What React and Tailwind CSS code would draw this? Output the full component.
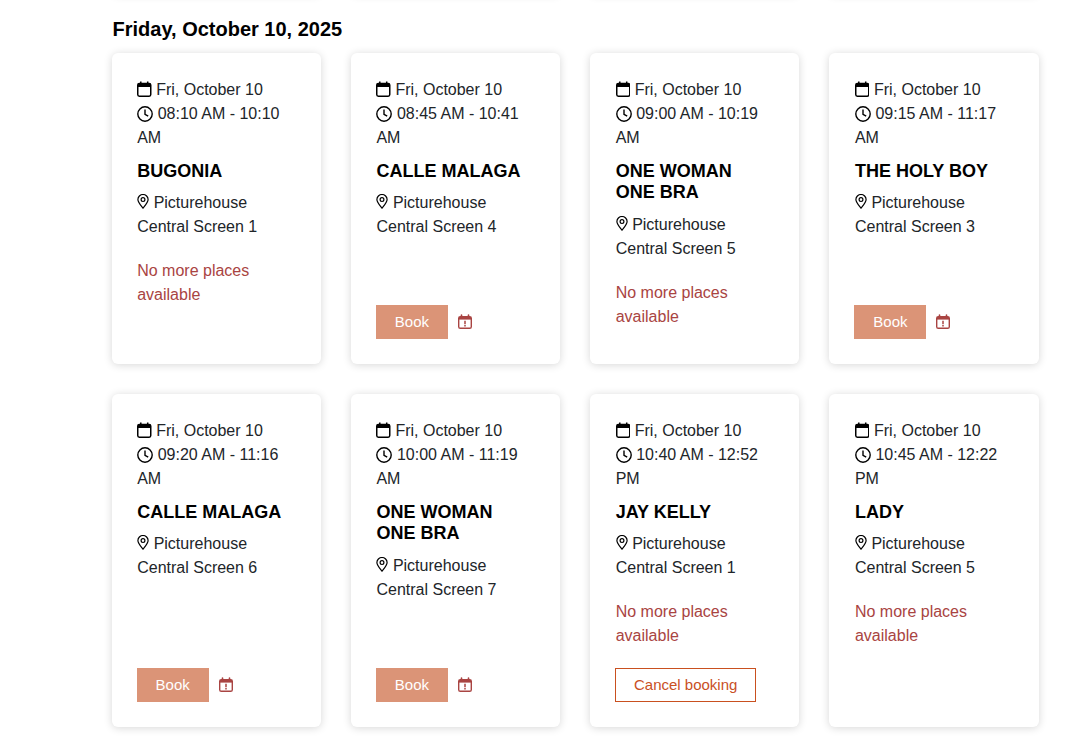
const rows = [
  [
    { time: '08:10 AM - 10:10 AM', title: 'BUGONIA', screen: 'Central Screen 1', full: true },
    { time: '08:45 AM - 10:41 AM', title: 'CALLE MALAGA', screen: 'Central Screen 4' },
    { time: '09:00 AM - 10:19 AM', title: 'ONE WOMAN ONE BRA', screen: 'Central Screen 5', full: true },
    { time: '09:15 AM - 11:17 AM', title: 'THE HOLY BOY', screen: 'Central Screen 3' },
  ],
  [
    { time: '09:20 AM - 11:16 AM', title: 'CALLE MALAGA', screen: 'Central Screen 6' },
    { time: '10:00 AM - 11:19 AM', title: 'ONE WOMAN ONE BRA', screen: 'Central Screen 7' },
    { time: '10:40 AM - 12:52 PM', title: 'JAY KELLY', screen: 'Central Screen 1', full: true, booked: true },
    { time: '10:45 AM - 12:22 PM', title: 'LADY', screen: 'Central Screen 5', full: true },
  ],
];

const cardShadow = 'rounded-md bg-white shadow-[0_1px_8px_rgba(0,0,0,0.16)]';

function CalendarIcon() {
  return (
    <svg width="14.5" height="16" viewBox="0 0 14.5 16" className="inline-block align-[-2px] text-black">
      <path d="M3.8 0.5v3M10.7 0.5v3" stroke="currentColor" strokeWidth="1.5" />
      <rect x="0.75" y="2.5" width="13" height="12.7" rx="1.6" fill="none" stroke="currentColor" strokeWidth="1.5" />
      <path d="M1 3h12.5v3H1z" fill="currentColor" />
    </svg>
  );
}

function ClockIcon() {
  return (
    <svg width="16" height="16" viewBox="0 0 16 16" className="inline-block align-[-2.5px] text-black">
      <circle cx="8" cy="8" r="7.2" fill="none" stroke="currentColor" strokeWidth="1.4" />
      <path d="M8 3.6V8.3l3.2 1.9" fill="none" stroke="currentColor" strokeWidth="1.4" />
    </svg>
  );
}

function PinIcon() {
  return (
    <svg width="12" height="15" viewBox="0 0 12 15" className="inline-block align-[-1px] text-black">
      <path
        d="M6 14.2C4.2 11.9 0.9 8.5 0.9 5.6a5.1 5.1 0 0 1 10.2 0C11.1 8.5 7.8 11.9 6 14.2z"
        fill="none"
        stroke="currentColor"
        strokeWidth="1.2"
      />
      <circle cx="6" cy="5.6" r="1.9" fill="none" stroke="currentColor" strokeWidth="1.2" />
    </svg>
  );
}

function CalendarAlert() {
  return (
    <svg width="16" height="16" viewBox="0 0 16 16" className="text-[#a94442]">
      <path d="M4.5 1v3M11.5 1v3" stroke="currentColor" strokeWidth="1.6" strokeLinecap="round" />
      <rect x="1.7" y="2.7" width="12.6" height="11.6" rx="1.6" fill="none" stroke="currentColor" strokeWidth="1.4" />
      <path d="M2 3h12v2.6H2z" fill="currentColor" />
      <path d="M8 6.8v3.4M8 11v1.4" stroke="currentColor" strokeWidth="1.5" />
    </svg>
  );
}

function Screening({ item }) {
  return (
    <div className={`flex flex-col px-[25.5px] pt-[25px] pb-[25px] ${cardShadow}`}>
      <div className="text-[#212529]">
        <div>
          <CalendarIcon /> Fri, October 10
        </div>
        <div>
          <ClockIcon /> {item.time}
        </div>
      </div>
      <h3 className="mt-[11px] mb-[8.7px] text-[18px] leading-[21.4px] font-bold text-black">{item.title}</h3>
      <div className="text-[#212529]">
        <PinIcon /> Picturehouse {item.screen}
      </div>
      {item.full && <p className="mt-5 mb-[10.5px] text-[#a94442]">No more places available</p>}
      {item.booked ? (
        <div className="mt-auto -ml-[0.5px] pt-[9.4px]">
          <button className="h-[34px] w-[141px] border border-[#c9501f] bg-white text-[15px] text-[#c9501f]">Cancel booking</button>
        </div>
      ) : (
        !item.full && (
          <div className="mt-auto -ml-[0.5px] flex items-center gap-[9px] pt-[9.4px]">
            <button className="h-[34px] w-[72px] bg-[#db9477] text-[15px] text-white">Book</button>
            <CalendarAlert />
          </div>
        )
      )}
    </div>
  );
}

export default function App() {
  return (
    <div className="h-[742px] overflow-hidden bg-white pl-[111.7px] font-['Liberation_Sans',Arial,sans-serif] text-base leading-6">
      {/* bottom edge of the row scrolled off above */}
      <div className="-mt-[26px] grid h-[20px] w-[927px] grid-cols-4 gap-[30px]">
        <div className={cardShadow} />
        <div className={cardShadow} />
        <div className={cardShadow} />
        <div className={cardShadow} />
      </div>
      <h2 className="pt-[23px] pb-3 pl-[0.8px] text-xl leading-6 font-bold text-black">Friday, October 10, 2025</h2>
      <div className="flex w-[927px] flex-col gap-[30px]">
        {rows.map((row, i) => (
          <div key={i} className="grid grid-cols-4 gap-[30px]">
            {row.map((item, j) => (
              <Screening key={j} item={item} />
            ))}
          </div>
        ))}
      </div>
    </div>
  );
}
